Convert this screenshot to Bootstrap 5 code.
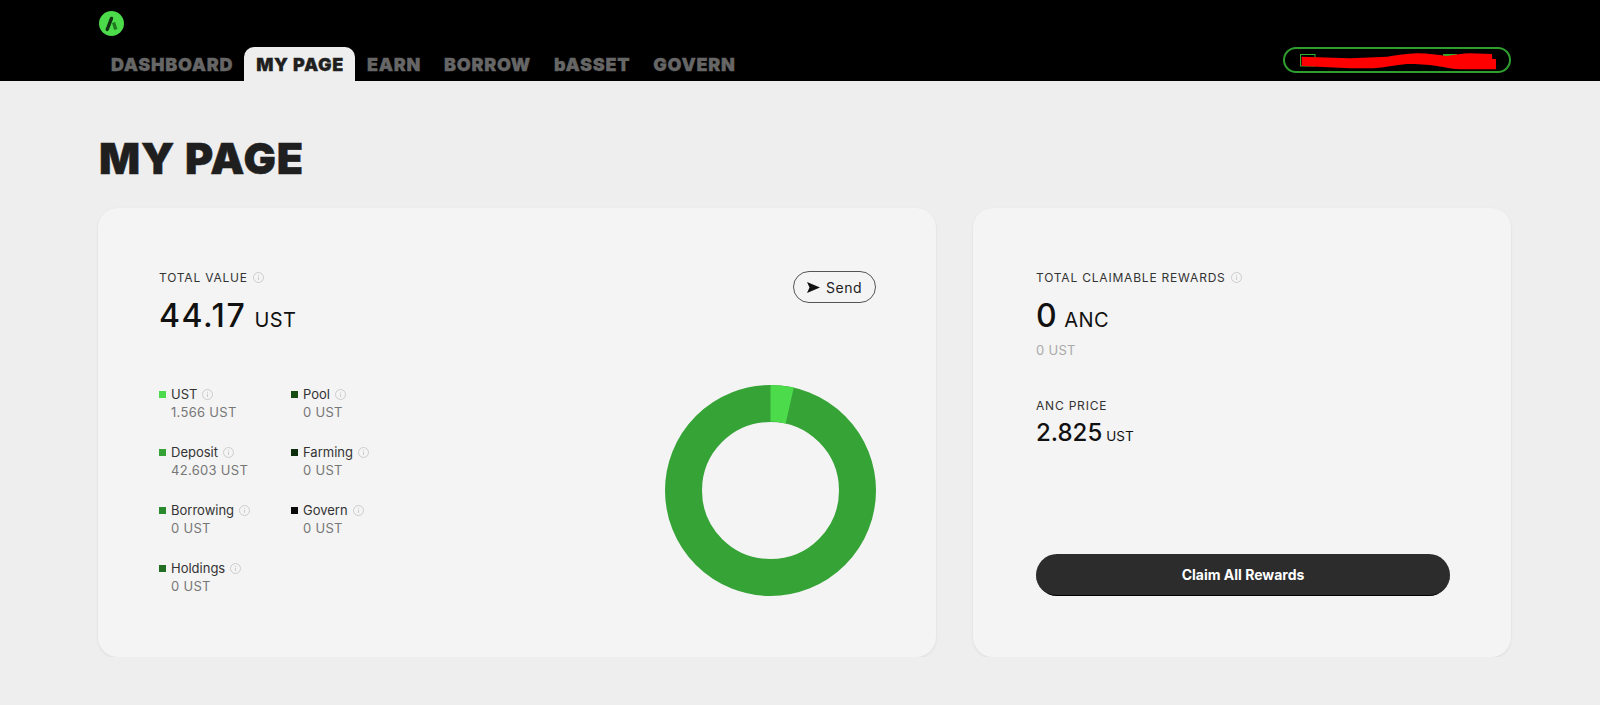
<!DOCTYPE html>
<html lang="en">
<head>
    <meta charset="UTF-8">
    <title>Anchor - My Page</title>
    <link href="https://cdn.jsdelivr.net/npm/bootstrap@5.3.2/dist/css/bootstrap.min.css" rel="stylesheet">
    <style>
        body {
            font-family: "Inter", "Liberation Sans", sans-serif;
            background-color: #eeeeee;
            color: #1a1a1a;
        }

        /* header */
        .top-bar {
            background-color: #000;
            height: 81px;
            padding: 11px 89px 0 99px;
        }
        .brand-logo { width: 25px; height: 25px; display: block; }
        .top-row { margin-top: 12px; height: 33px; }
        .menu-link {
            font-weight: 900;
            font-size: 18px;
            letter-spacing: .7px;
            -webkit-text-stroke: .3px currentColor;
            line-height: 33px;
            color: #666;
            padding: 1px 11px 0 12px;
            text-decoration: none;
            border-radius: 10px 10px 0 0;
        }
        .menu-link.is-active { background-color: #eeeeee; color: #1f1f1f; }
        .wallet-btn {
            width: 228px;
            height: 26px;
            margin-bottom: 8px;
            border: 2px solid #2f9e2f;
            padding: 0;
            overflow: hidden;
        }
        .wallet-btn svg { display: block; }

        /* page */
        .page-wrap { padding: 0 89px 0 98px; }
        .page-title {
            font-weight: 900;
            font-size: 43px;
            letter-spacing: 1px;
            -webkit-text-stroke: .5px currentColor;
            line-height: 52px;
            color: #1f1f1f;
            margin: 51px 0 24px 1px;
        }
        .panel {
            background-color: #f4f4f4;
            border: 0;
            border-radius: 20px;
            box-shadow: 0 1px 3px rgba(0, 0, 0, .08);
            height: 449px;
        }
        .panel-left { width: 838px; padding: 62px 60px 61px 61px; }
        .panel-right { width: 538px; padding: 62px 61px 61px 63px; }

        .cap-label { font-size: 12px; line-height: 16px; letter-spacing: .8px; color: #333; }
        .big-num { font-size: 32px; line-height: 38px; font-weight: 500; letter-spacing: 1.6px; margin-top: 11px; color: #111; }
        .big-num .unit { font-size: 20px; font-weight: 400; letter-spacing: .4px; margin-left: 8px; }
        .big-num .unit-tight { margin-left: 6px; }
        .sub-val { font-size: 13px; line-height: 16px; letter-spacing: .3px; color: #aaa; margin-top: 3px; }
        .price-gap { margin-top: 40px; }
        .price-num { font-size: 24px; line-height: 30px; font-weight: 500; color: #111; margin-top: 4px; }
        .price-num .unit { font-size: 13.5px; font-weight: 400; margin-left: 4px; }

        .info-dot { width: 11px; height: 11px; margin-left: 5px; vertical-align: -1px; }

        .send-btn {
            width: 83px;
            height: 32px;
            border: 1px solid #555;
            font-size: 14px;
            letter-spacing: .5px;
            color: #222;
            padding: 0;
            margin-top: 1px;
            gap: 6px;
        }

        .chart-row { margin-top: 46px; }
        .legend-grid {
            display: grid;
            grid-template-columns: 132px auto;
            grid-template-rows: repeat(4, 58px);
            grid-auto-flow: column;
            justify-content: start;
        }
        .legend-name { font-size: 13px; line-height: 18px; color: #333; }
        .legend-val { font-size: 13px; line-height: 18px; letter-spacing: .3px; color: #777; padding-left: 12px; }
        .swatch { width: 7px; height: 7px; display: inline-block; margin-right: 5px; vertical-align: 1px; }
        .sw-ust { background: #4bdb4b; }
        .sw-deposit { background: #36a337; }
        .sw-borrow { background: #2a8a2b; }
        .sw-hold { background: #226e22; }
        .sw-pool { background: #154d15; }
        .sw-farm { background: #0c2e0c; }
        .sw-gov { background: #0a0a0a; }

        .donut { width: 211px; height: 211px; display: block; }

        .claim-btn {
            height: 42px;
            background-color: #2c2c2c;
            border: 0;
            border-bottom: 1px solid #000;
            color: #fff;
            font-size: 14px;
            font-weight: 700;
        }
    </style>
</head>
<body>
    <svg class="d-none">
        <symbol id="info" viewBox="0 0 11 11"><circle cx="5.5" cy="5.5" r="5" fill="none" stroke="#ccc"/><path d="M5.5 2.8v1M5.5 4.8v3.2" stroke="#ccc"/></symbol>
    </svg>

    <div class="top-bar">
        <svg class="brand-logo" viewBox="0 0 25 25">
            <circle cx="12.5" cy="12.5" r="12.5" fill="#4bdb4b"/>
            <path d="M14.6 11.5 L16.8 18.5" stroke="#1f7a1f" stroke-width="3.4" fill="none"/>
            <path d="M12.5 7.4 L8.2 18.5" stroke="#10300f" stroke-width="3.4" stroke-linecap="round" fill="none"/>
        </svg>
        <div class="top-row d-flex justify-content-between align-items-end">
            <nav class="d-flex">
                <a class="menu-link" href="#">DASHBOARD</a>
                <a class="menu-link is-active" href="#">MY PAGE</a>
                <a class="menu-link" href="#">EARN</a>
                <a class="menu-link" href="#">BORROW</a>
                <a class="menu-link" href="#">bASSET</a>
                <a class="menu-link" href="#">GOVERN</a>
            </nav>
            <button class="btn rounded-pill wallet-btn" type="button" aria-label="Wallet">
                <svg width="224" height="22" viewBox="0 0 224 22">
                    <rect x="15.5" y="5.5" width="14.5" height="11.5" fill="none" stroke="#2fae2f"/>
                    <rect x="158" y="5" width="14" height="3" fill="#2fae2f"/>
                    <path d="M16.7 7.7 L65 9.3 L102 7.7 C112 6 122 4.6 132 4.3 C142 4.2 152 6 162 7 C170 6 178 4.4 185 4.3 L207 5 L207.3 10 L211 10 L211 20.3 L175 20.3 C165 19.6 158 18 152 17 C142 15.5 132 15 122 15 C110 16 100 18.5 88 19.3 L65 19.3 L16.7 17 Z" fill="#ff0000"/>
                </svg>
            </button>
        </div>
    </div>

    <div class="page-wrap">
        <h1 class="page-title">MY PAGE</h1>
        <div class="d-flex justify-content-between">
            <section class="card panel panel-left">
                <div class="d-flex justify-content-between align-items-start">
                    <div>
                        <div class="cap-label">TOTAL VALUE<svg class="info-dot"><use href="#info"/></svg></div>
                        <div class="big-num">44.17<span class="unit">UST</span></div>
                    </div>
                    <button class="btn rounded-pill send-btn d-flex align-items-center justify-content-center" type="button">
                        <svg width="13" height="11" viewBox="0 0 13 11"><path d="M0 0 L13 5.5 L0 11 L2.5 5.5 Z" fill="#111"/></svg>
                        Send
                    </button>
                </div>
                <div class="chart-row d-flex justify-content-between align-items-start">
                    <div class="legend-grid">
                        <div><div class="legend-name"><span class="swatch sw-ust"></span>UST<svg class="info-dot"><use href="#info"/></svg></div><div class="legend-val">1.566 UST</div></div>
                        <div><div class="legend-name"><span class="swatch sw-deposit"></span>Deposit<svg class="info-dot"><use href="#info"/></svg></div><div class="legend-val">42.603 UST</div></div>
                        <div><div class="legend-name"><span class="swatch sw-borrow"></span>Borrowing<svg class="info-dot"><use href="#info"/></svg></div><div class="legend-val">0 UST</div></div>
                        <div><div class="legend-name"><span class="swatch sw-hold"></span>Holdings<svg class="info-dot"><use href="#info"/></svg></div><div class="legend-val">0 UST</div></div>
                        <div><div class="legend-name"><span class="swatch sw-pool"></span>Pool<svg class="info-dot"><use href="#info"/></svg></div><div class="legend-val">0 UST</div></div>
                        <div><div class="legend-name"><span class="swatch sw-farm"></span>Farming<svg class="info-dot"><use href="#info"/></svg></div><div class="legend-val">0 UST</div></div>
                        <div><div class="legend-name"><span class="swatch sw-gov"></span>Govern<svg class="info-dot"><use href="#info"/></svg></div><div class="legend-val">0 UST</div></div>
                    </div>
                    <svg class="donut" viewBox="0 0 211 211">
                        <circle cx="105.5" cy="105.5" r="87" fill="none" stroke="#36a337" stroke-width="37"/>
                        <path d="M105.5 0 A105.5 105.5 0 0 1 128.8 2.6 L120.7 38.6 A69 69 0 0 0 105.5 36.5 Z" fill="#4bdb4b"/>
                    </svg>
                </div>
            </section>

            <section class="card panel panel-right d-flex flex-column justify-content-between">
                <div>
                    <div class="cap-label">TOTAL CLAIMABLE REWARDS<svg class="info-dot"><use href="#info"/></svg></div>
                    <div class="big-num">0<span class="unit unit-tight">ANC</span></div>
                    <div class="sub-val">0 UST</div>
                    <div class="cap-label price-gap">ANC PRICE</div>
                    <div class="price-num">2.825<span class="unit">UST</span></div>
                </div>
                <button class="btn rounded-pill w-100 claim-btn" type="button">Claim All Rewards</button>
            </section>
        </div>
    </div>

    <script src="https://cdn.jsdelivr.net/npm/bootstrap@5.3.2/dist/js/bootstrap.bundle.min.js"></script>
</body>
</html>
